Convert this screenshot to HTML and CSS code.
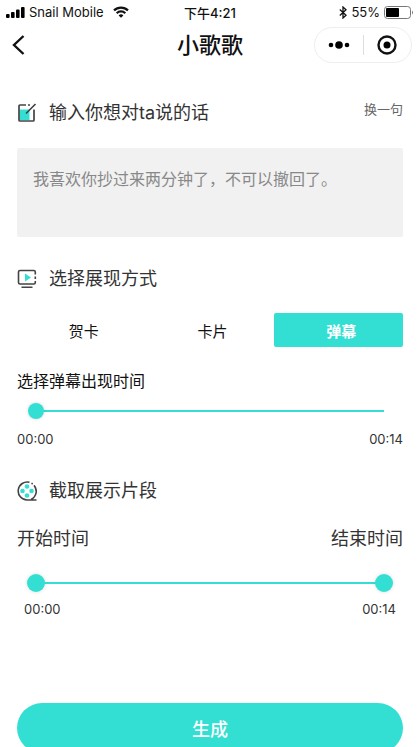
FILE: index.html
```html
<!DOCTYPE html>
<html lang="zh-CN">
<head>
<meta charset="utf-8">
<meta name="viewport" content="width=device-width, initial-scale=1">
<title>小歌歌</title>
<link rel="stylesheet" href="styles.css">
</head>
<body>
<header>
  <div class="status">
    <div class="status-side">
      <svg width="19" height="11" viewBox="0 0 19 11" aria-hidden="true"><rect x="0" y="7" width="3.6" height="4" rx="1"/><rect x="5" y="5" width="3.6" height="6" rx="1"/><rect x="10" y="2.500" width="3.600" height="8.500" rx="1"/><rect x="15" y="0" width="3.600" height="11" rx="1"/></svg>
      <span class="carrier">Snail Mobile</span>
      <svg class="wifi" width="16" height="12" viewBox="0 0 16 12" fill="none" stroke="#111" stroke-width="2.200" aria-hidden="true"><path d="M1 4.400a10 10 0 0 1 14 0M3.700 7.200a6.200 6.200 0 0 1 8.600 0"/><path d="M8 11.800 5.600 9.400a3.400 3.400 0 0 1 4.800 0z" fill="#111" stroke="none"/></svg>
    </div>
    <span class="clock">下午4:21</span>
    <div class="status-side status-end">
      <svg width="8" height="13" viewBox="0 0 8 13" fill="none" stroke="#111" stroke-width="1.300" aria-hidden="true"><path d="M.8 3.500 7 9.300 4 12V1l3 2.700L.8 9.500"/></svg>
      <span>55%</span>
      <svg width="30" height="13" viewBox="0 0 30 13" aria-hidden="true"><rect x=".5" y=".5" width="26" height="12" rx="3" fill="none" stroke="#777"/><rect x="2" y="2" width="13" height="9" rx="1"/><path d="M28 4.500q2 2 0 4z" fill="#777"/></svg>
    </div>
  </div>
  <nav class="nav">
    <button class="back" aria-label="返回"><svg width="13" height="20" viewBox="0 0 13 20" fill="none" stroke="#111" stroke-width="2.400"><path d="M11.500 1 2 10l9.500 9"/></svg></button>
    <h1>小歌歌</h1>
    <div class="capsule">
      <button aria-label="更多"><svg width="22" height="8" viewBox="0 0 22 8"><circle cx="3" cy="4" r="2.300"/><circle cx="11" cy="4" r="3.800"/><circle cx="19" cy="4" r="2.300"/></svg></button>
      <button aria-label="关闭"><svg width="20" height="20" viewBox="0 0 20 20"><circle cx="10" cy="10" r="8.500" fill="none" stroke="#111" stroke-width="2.400"/><circle cx="10" cy="10" r="3.500"/></svg></button>
    </div>
  </nav>
</header>
<main>
  <section class="message">
    <div class="heading">
      <svg class="icon" viewBox="0 0 20 20" fill="none" aria-hidden="true"><path d="M2.500 6.500H12.500V17H2.500z" fill="#33dfd3"/><path d="M2 5V3Q2 2 3 2h6M11 2h2M2 5v12q0 1 1 1h13q1 0 1-1V6.500M9 10.500 18.500 1" stroke="#444" stroke-width="1.700"/></svg>
      <h2><label for="words">输入你想对ta说的话</label></h2>
      <button class="swap">换一句</button>
    </div>
    <textarea id="words">我喜欢你抄过来两分钟了，不可以撤回了。</textarea>
  </section>
  <section class="display">
    <div class="heading">
      <svg class="icon" viewBox="0 0 20 20" fill="none" aria-hidden="true"><path d="M8 4.500 14 8.500 8 12.500z" fill="#33dfd3"/><path d="M18.300 5.500V3Q18.300 1.500 16.800 1.500H3Q1.500 1.500 1.500 3v10.500Q1.500 15 3 15h13.800q1.500 0 1.500-1.500V12M18.300 7.500v2.500M4.500 18.300h11" stroke="#444" stroke-width="1.600"/></svg>
      <h2>选择展现方式</h2>
    </div>
    <div class="tabs">
      <button>贺卡</button>
      <button>卡片</button>
      <button class="active" aria-pressed="true">弹幕</button>
    </div>
    <label class="time-label" for="appear">选择弹幕出现时间</label>
    <input class="slider" id="appear" type="range" min="0" max="14" value="0">
    <div class="times"><span>00:00</span><span>00:14</span></div>
  </section>
  <section class="clip">
    <div class="heading">
      <svg class="icon" viewBox="0 0 20 20" fill="none" aria-hidden="true"><g fill="#33dfd3"><circle cx="10" cy="5.500" r="2.300"/><circle cx="5.500" cy="10" r="2.300"/><circle cx="14.500" cy="10" r="2.300"/><circle cx="10" cy="14.500" r="2.300"/></g><path d="M12.500 1.300A9 9 0 1 0 10 19h9.500M14.500 2.200l1.200.8M17 4.400A9 9 0 0 1 14 18.500" stroke="#444" stroke-width="1.600"/></svg>
      <h2>截取展示片段</h2>
    </div>
    <div class="range-labels"><label for="start">开始时间</label><label for="end">结束时间</label></div>
    <div class="range">
      <input class="slider" id="start" type="range" min="0" max="14" value="0">
      <input class="slider" id="end" type="range" min="0" max="14" value="14">
    </div>
    <div class="times inset"><span>00:00</span><span>00:14</span></div>
  </section>
  <button class="generate">生成</button>
</main>
</body>
</html>
```
FILE: styles.css
```css
* { box-sizing: border-box; }

html { scrollbar-width: none; }

body {
  margin: 0;
  background: #fff;
  color: #333;
  font-family: Inter, "Noto Sans CJK SC", sans-serif;
}

button {
  padding: 0;
  border: 0;
  background: none;
  color: inherit;
  font: inherit;
}

svg { display: block; flex: none; }

h1, h2 { margin: 0; font-weight: 400; }

.status {
  display: grid;
  grid-template-columns: 1fr auto 1fr;
  align-items: center;
  height: 24px;
  padding: 0 6px;
  color: #111;
  font-size: 13px;
}

.status-side { display: flex; align-items: center; gap: 4px; }
.status-end { justify-content: flex-end; }
.wifi { margin-left: 5px; }
.clock { font-weight: 500; }

.nav {
  display: grid;
  grid-template-columns: 1fr auto 1fr;
  align-items: center;
  height: 42px;
  padding: 0 8px;
  color: #111;
}

.nav h1 { font-size: 22px; font-weight: 500; line-height: 32px; }
.back { justify-self: start; padding-left: 4px; }

.capsule {
  display: flex;
  justify-self: end;
  width: 98px;
  height: 36px;
  border: 1px solid #eee;
  border-radius: 18px;
}

.capsule button { display: grid; flex: 1; place-items: center; }
.capsule button + button { position: relative; }
.capsule button + button::before {
  content: "";
  position: absolute;
  left: 0;
  top: 7px;
  height: 20px;
  border-left: 1px solid #ddd;
}

main { padding: 33px 17px 0; }

.heading { display: flex; align-items: center; height: 28px; }
.heading h2 { font-size: 18px; line-height: 28px; }
.icon { width: 20px; height: 20px; margin-right: 12px; }

.swap {
  align-self: flex-start;
  margin-left: auto;
  color: #666;
  font-size: 13px;
  line-height: 20px;
}

textarea {
  display: block;
  width: 100%;
  height: 89px;
  margin-top: 21px;
  padding: 19px 16px;
  border: 0;
  border-radius: 2px;
  background: #f1f1f1;
  color: #888;
  font: inherit;
  font-size: 16px;
  line-height: 24px;
  resize: none;
}

.display { margin-top: 28px; }

.tabs {
  display: grid;
  grid-template-columns: repeat(3, 1fr);
  height: 34px;
  margin-top: 20px;
  color: #111;
  font-size: 15px;
}

.tabs button { padding-left: 5px; }

.tabs .active {
  border-radius: 2px;
  background: #33dfd3;
  color: #fff;
  font-weight: 700;
}

.time-label {
  display: block;
  margin-top: 22px;
  color: #111;
  font-size: 16px;
  line-height: 24px;
}

.slider {
  --thumb: 16px;
  display: block;
  width: calc(100% - 22px);
  height: 20px;
  margin: 8px 11px 0;
  background: none;
  appearance: none;
}

.slider::-webkit-slider-runnable-track {
  height: 2px;
  background: linear-gradient(#33dfd3, #33dfd3) center / calc(100% - var(--thumb)) 2px no-repeat;
}

.slider::-webkit-slider-thumb {
  width: var(--thumb);
  height: var(--thumb);
  margin-top: calc(1px - var(--thumb) / 2);
  border-radius: 50%;
  background: #33dfd3;
  box-shadow: 0 0 4px #0002;
  appearance: none;
  pointer-events: auto;
}

.times {
  display: flex;
  justify-content: space-between;
  margin-top: 8px;
  font-size: 13px;
  line-height: 20px;
}

.clip { margin-top: 28px; }

.range-labels {
  display: flex;
  justify-content: space-between;
  margin-top: 20px;
  font-size: 18px;
  line-height: 28px;
}

.range { display: grid; margin: 20px 10px 0; }

.range .slider {
  --thumb: 18px;
  grid-area: 1 / 1;
  width: 100%;
  margin: 0;
  pointer-events: none;
}

.inset { margin-top: 6px; padding: 0 7px; }

.generate {
  display: block;
  width: 100%;
  height: 50px;
  margin-top: 84px;
  border-radius: 25px;
  background: #33dfd3;
  color: #fff;
  font-size: 18px;
  font-weight: 500;
}
```
